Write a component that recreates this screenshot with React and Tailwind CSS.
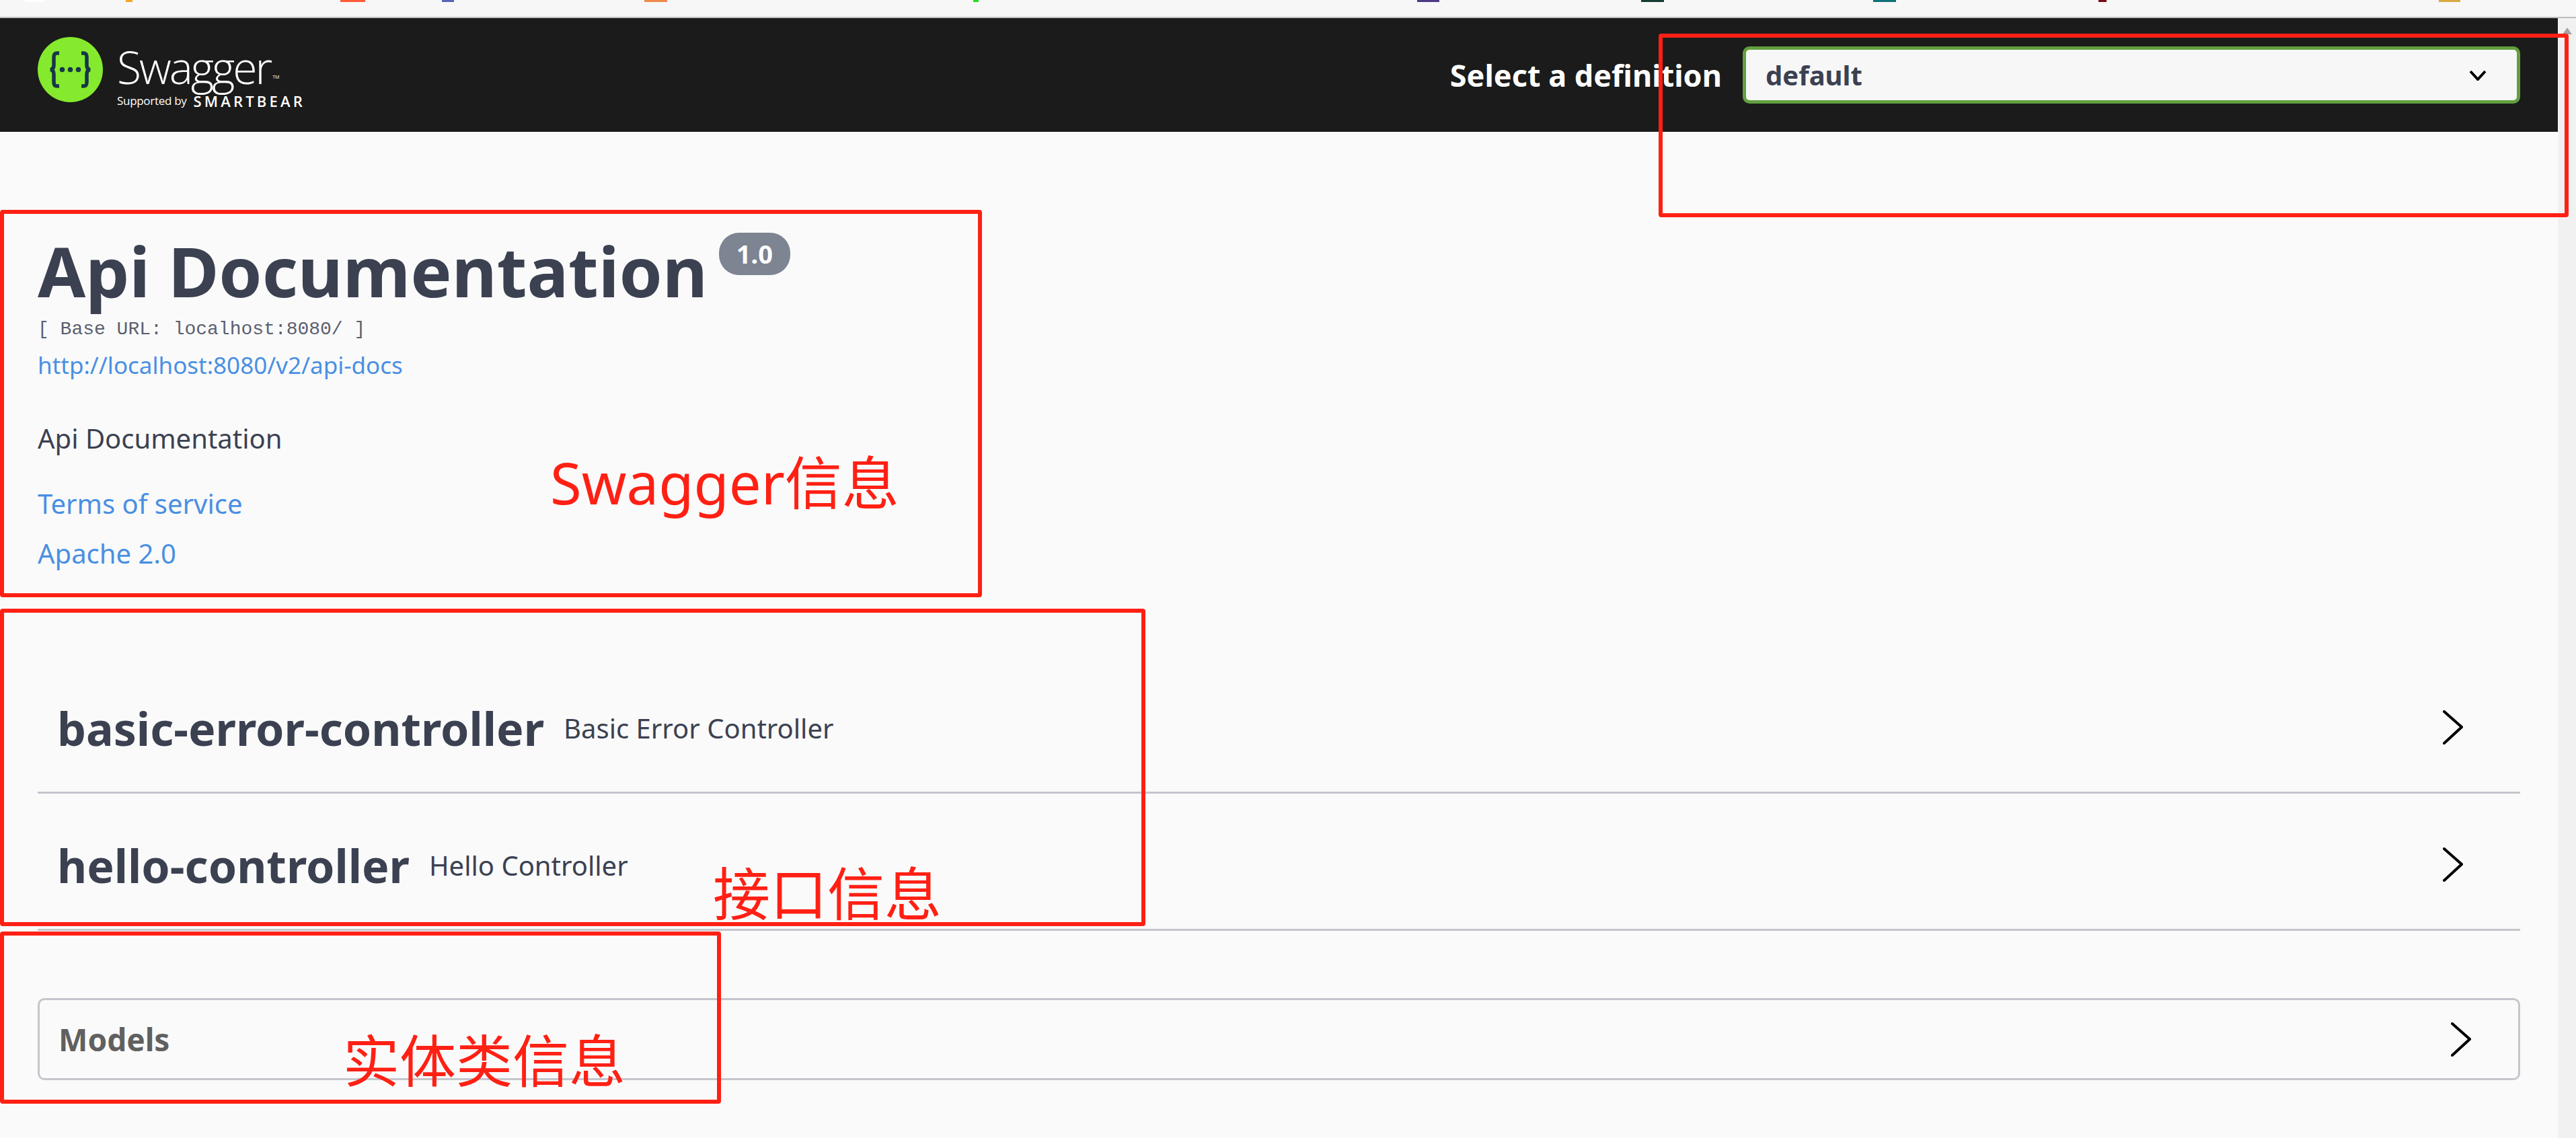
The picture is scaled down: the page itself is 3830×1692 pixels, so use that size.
import React from 'react';

const sans = 'font-["Noto_Sans","Noto_Sans_CJK_SC",sans-serif]';

// bits of the bookmark icons cut off at the top edge of the capture
const bookmarks = [
    { left: 37, width: 29, color: '#ffffff' },
    { left: 187, width: 10, color: '#f5a623' },
    { left: 506, width: 37, color: '#ff5a36' },
    { left: 657, width: 18, color: '#5566b8' },
    { left: 958, width: 34, color: '#f08a4b' },
    { left: 1447, width: 8, color: '#22dd22' },
    { left: 2107, width: 33, color: '#4f3a86' },
    { left: 2440, width: 34, color: '#163d33' },
    { left: 2785, width: 34, color: '#0f7277' },
    { left: 3120, width: 12, color: '#7a0c10' },
    { left: 3626, width: 32, color: '#d9a942' },
];

function Chevron() {
    return (
        <svg width="30" height="51" viewBox="0 0 30 51" fill="none" className="shrink-0">
            <path d="M2 2 L28 25 L2 49" stroke="#000" strokeWidth="4" strokeLinecap="round" strokeLinejoin="miter" />
        </svg>
    );
}

function Logo() {
    return (
        <div className="flex items-start self-start mt-[28px] h-[97px]">
            <svg width="97" height="97" viewBox="0 0 97 97" className="shrink-0">
                <circle cx="48.5" cy="48.5" r="48.5" fill="#85ea2d" />
                <path
                    d="M32 24 h-3 c-4 0-5 2-5 6 v12 c0 4-2 6-5 6.500 c3 .5 5 2.500 5 6.500 v12 c0 4 1 6 5 6 h3 M65 24 h3 c4 0 5 2 5 6 v12 c0 4 2 6 5 6.500 c-3 .5-5 2.500-5 6.500 v12 c0 4-1 6-5 6 h-3"
                    fill="none"
                    stroke="#173647"
                    strokeWidth="5.500"
                />
                <circle cx="36.500" cy="48.500" r="3.800" fill="#173647" />
                <circle cx="48.500" cy="48.500" r="3.800" fill="#173647" />
                <circle cx="60.500" cy="48.500" r="3.800" fill="#173647" />
            </svg>
            <div className="ml-[21px] mt-[6px] flex flex-col font-['Open_Sans',sans-serif] text-white">
                <div className="flex items-end h-[76px] whitespace-nowrap">
                    <span className="text-[66px] leading-[76px] font-light tracking-[-3px]">Swagger</span>
                    <span className="ml-[3px] mb-[18px] text-[7px] leading-[8px]">TM</span>
                </div>
                <div className="flex items-center h-[24px] mt-[1px] whitespace-nowrap">
                    <span className="text-[17px] leading-[24px] tracking-[-0.3px]">Supported by</span>
                    <span className="ml-[10px] text-[22px] leading-[24px] font-semibold tracking-[4.2px]">SMARTBEAR</span>
                </div>
            </div>
        </div>
    );
}

function TopBar() {
    return (
        <div className="flex items-center justify-between h-[169px] bg-[#1b1b1b] pl-[56px] pr-[56px]">
            <Logo />
            <div className="flex items-center">
                <span className={`${sans} text-[45px] font-bold text-white leading-none whitespace-nowrap`}>Select a definition</span>
                <div className="ml-[31px] flex items-center justify-between w-[1156px] h-[85px] rounded-[10px] border-[5px] border-[#62a03f] bg-[#f7f7f7] pl-[29px] pr-[45px]">
                    <span className={`${sans} text-[40px] font-bold text-[#3b4151]`}>default</span>
                    <svg width="26" height="16" viewBox="0 0 26 16" fill="none">
                        <path d="M2 2 L13 14 L24 2" stroke="#000" strokeWidth="4" />
                    </svg>
                </div>
            </div>
        </div>
    );
}

function Info() {
    return (
        <div className={`${sans} pl-[56px] pt-[145px]`}>
            <div className="flex items-start h-[125px]">
                <h2 className="text-[103px] leading-[123px] font-bold text-[#3b4151] whitespace-nowrap">Api Documentation</h2>
                <span className="ml-[17px] mt-[5px] flex items-center justify-center w-[106px] h-[63px] rounded-[30px] bg-[#7d8492] text-[38px] font-bold text-white">1.0</span>
            </div>
            <p className="font-['Liberation_Mono',monospace] text-[28px] leading-[32px] text-[#5b6070] mt-[8px]">[ Base URL: localhost:8080/ ]</p>
            <a className="block text-[35px] leading-[44px] text-[#4990e2] mt-[15px]">http://localhost:8080/v2/api-docs</a>
            <p className="text-[40px] leading-[50px] text-[#3b4151] mt-[62px]">Api Documentation</p>
            <a className="block text-[40px] leading-[50px] text-[#4990e2] mt-[47px]">Terms of service</a>
            <a className="block text-[40px] leading-[50px] text-[#4990e2] mt-[24px]">Apache 2.0</a>
        </div>
    );
}

function TagRow({ name, description, height }) {
    return (
        <div className={`flex items-center justify-between ${height} border-b-[3px] border-[#c4c6cc] pl-[29px] pr-[85px] pt-[10px]`}>
            <div className={`${sans} flex items-center pt-[3px]`}>
                <span className="text-[68px] leading-none font-bold text-[#3b4151] whitespace-nowrap">{name}</span>
                <span className="ml-[29px] text-[40px] leading-none text-[#3b4151] whitespace-nowrap">{description}</span>
            </div>
            <Chevron />
        </div>
    );
}

function Models() {
    return (
        <div className="flex items-center justify-between h-[122px] mt-[100px] rounded-[10px] border-[3px] border-[#c4c6cc] pl-[28px] pr-[70px]">
            <span className={`${sans} text-[46px] font-bold text-[#606060]`}>Models</span>
            <Chevron />
        </div>
    );
}

function Annotation({ className }) {
    return <div className={`absolute rounded-[4px] border-[6px] border-[#ff2014] ${className}`} />;
}

function App() {
    return (
        <div className="relative w-[3830px] h-[1692px] overflow-hidden bg-[#fafafa]">
            <div className="relative h-[27px] bg-[#f7f7f7] border-b-[2px] border-[#bdbdbd]">
                {bookmarks.map((b) => (
                    <span key={b.left} className="absolute top-0 h-[3px]" style={{ left: b.left, width: b.width, backgroundColor: b.color }} />
                ))}
            </div>
            <div className="flex">
                <div className="flex-1 min-w-0">
                    <TopBar />
                    <Info />
                    <div className="pl-[56px] pr-[56px] mt-[127px]">
                        <TagRow name="basic-error-controller" description="Basic Error Controller" height="h-[205px]" />
                        <TagRow name="hello-controller" description="Hello Controller" height="h-[204px]" />
                        <Models />
                    </div>
                </div>
                <div className="w-[27px] h-[1665px] bg-[#f1f1f1] flex justify-center pt-[14px]">
                    <svg width="14" height="10" viewBox="0 0 14 10"><path d="M7 0 L14 10 H0 Z" fill="#a3a3a3" /></svg>
                </div>
            </div>

            {/* red annotation boxes drawn over the screenshot */}
            <Annotation className="left-[2466px] top-[50px] w-[1353px] h-[273px]" />
            <Annotation className="left-0 top-[312px] w-[1460px] h-[576px]" />
            <Annotation className="left-0 top-[905px] w-[1703px] h-[472px]" />
            <Annotation className="left-0 top-[1385px] w-[1072px] h-[256px]" />
            <span className={`${sans} absolute left-[818px] top-[652px] text-[85px] leading-[130px] text-[#ff2014] whitespace-nowrap`}>Swagger信息</span>
            <span className={`${sans} absolute left-[1060px] top-[1268px] text-[85px] leading-[120px] text-[#ff2014] whitespace-nowrap`}>接口信息</span>
            <span className={`${sans} absolute left-[510px] top-[1517px] text-[84px] leading-[120px] text-[#ff2014] whitespace-nowrap`}>实体类信息</span>
        </div>
    );
}

export default App;
